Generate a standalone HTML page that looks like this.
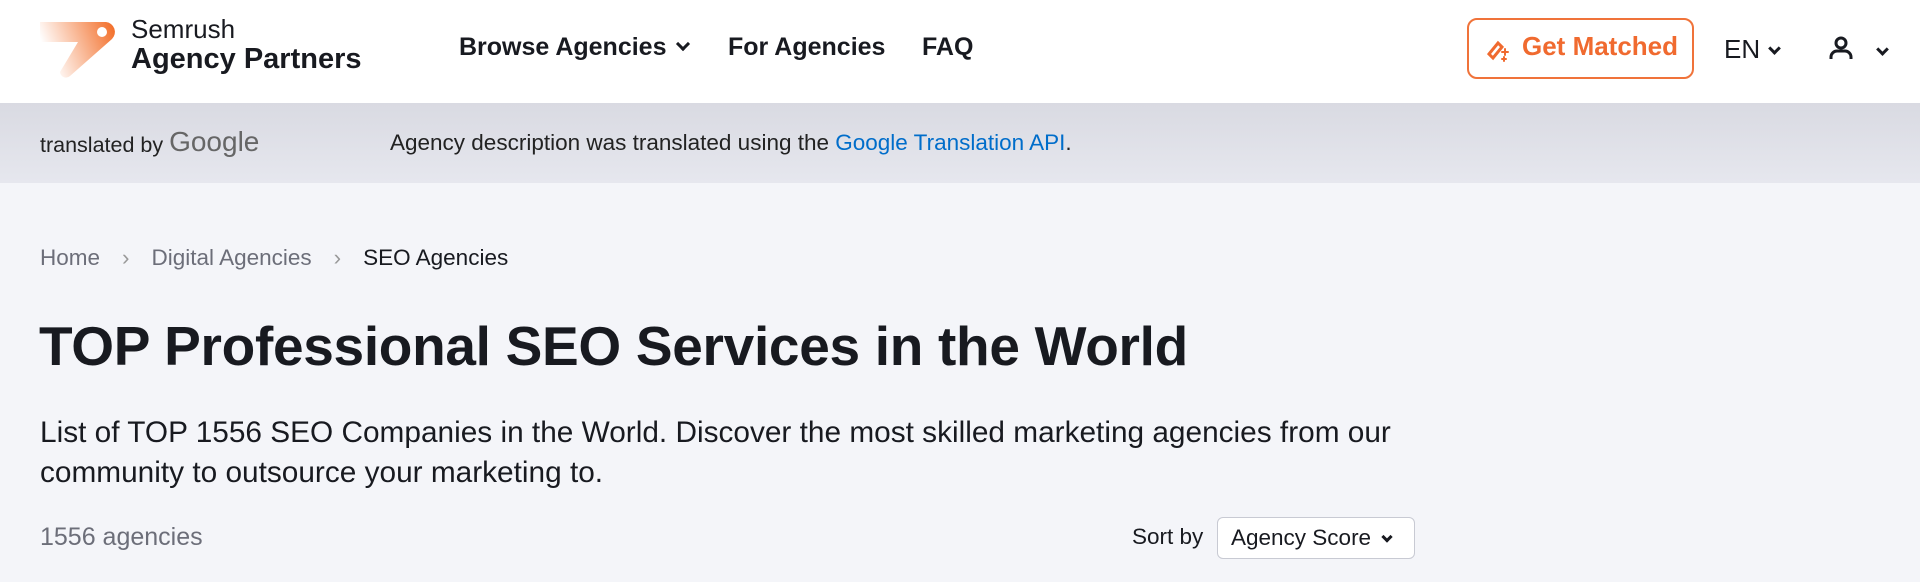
<!DOCTYPE html>
<html><head><meta charset="utf-8"><style>
*{margin:0;padding:0;box-sizing:border-box}
body{width:1920px;height:582px;overflow:hidden;background:#f4f5f9;font-family:"Liberation Sans",sans-serif;color:#181a20;position:relative}
.hdr{position:absolute;left:0;top:0;width:1920px;height:103px;background:#fff}
.band{position:absolute;left:0;top:103px;width:1920px;height:80px;background:linear-gradient(#d9dae2,#e6e7ee)}
.a{position:absolute;white-space:nowrap}
.nav{font-weight:bold;font-size:25px;top:33px}
.chev{display:inline-block;width:10px;height:10px;border-right:3px solid #181a20;border-bottom:3px solid #181a20;transform:rotate(45deg);margin-left:12px;position:relative;top:-6px}
.sep{color:#999;margin:0 22px}
</style></head><body>
<div class="hdr"></div>
<svg class="a" style="left:36px;top:16px" width="84" height="64" viewBox="0 0 84 64">
<defs><linearGradient id="g" x1="1" y1="0" x2="0" y2="0.3"><stop offset="0" stop-color="#f26a22"/><stop offset="1" stop-color="#f26a22" stop-opacity="0"/></linearGradient></defs>
<path d="M4 6 H70 a10 10 0 0 1 6 17 L34 60 a6 6 0 0 1 -10 -4 L42 26 H4 Z" fill="url(#g)"/>
<circle cx="66" cy="16" r="5" fill="#fff"/>
</svg>
<div class="a" style="left:131px;top:14px;font-size:26px;color:#181a20">Semrush</div>
<div class="a" style="left:131px;top:43px;font-size:29px;font-weight:bold">Agency Partners</div>
<div class="a nav" style="left:459px">Browse Agencies<span class="chev"></span></div>
<div class="a nav" style="left:728px">For Agencies</div>
<div class="a nav" style="left:922px">FAQ</div>
<div class="a" style="left:1467px;top:18px;width:227px;height:61px;border:2px solid #f0733a;border-radius:10px;background:#fff"></div>
<svg class="a" style="left:1485px;top:36px" width="26" height="26" viewBox="0 0 26 26" fill="none" stroke="#f06a2f" stroke-width="3" stroke-linecap="round"><path d="M4 18 L13 7 L17 11 L8 22 Z"/><path d="M20 13 v6 M17 16 h6 M19 21 v4 M17 23 h4" stroke-width="2"/></svg>
<div class="a" style="left:1522px;top:31px;font-size:26px;color:#f06a2f;font-weight:bold">Get Matched</div>
<div class="a" style="left:1724px;top:34px;font-size:26px">EN<span class="chev" style="width:9px;height:9px;margin-left:10px;top:-5px"></span></div>
<svg class="a" style="left:1828px;top:35px" width="26" height="26" viewBox="0 0 26 26" fill="none" stroke="#181a20" stroke-width="3"><circle cx="13" cy="8" r="5"/><path d="M3 24 v-2 a6 6 0 0 1 6 -6 h8 a6 6 0 0 1 6 6 v2"/></svg>
<span class="a chev" style="left:1866px;top:41px;width:9px;height:9px"></span>
<div class="band"></div>
<div class="a" style="left:40px;top:127px;font-size:21.5px;color:#222">translated by <span style="font-size:28px;color:#666;position:relative;top:-1px">Google</span></div>
<div class="a" style="left:390px;top:130px;font-size:22.5px;color:#222">Agency description was translated using the <span style="color:#006dca">Google Translation API</span>.</div>
<div class="a" style="left:40px;top:245px;font-size:22.5px;color:#6c6e79">Home<span class="sep">&#8250;</span>Digital Agencies<span class="sep">&#8250;</span><span style="color:#181a20">SEO Agencies</span></div>
<div class="a" style="left:39px;top:314px;font-size:55px;font-weight:bold;letter-spacing:-0.3px">TOP Professional SEO Services in the World</div>
<div class="a" style="left:40px;top:413px;font-size:29.8px;line-height:40px;color:#181a20">List of TOP 1556 SEO Companies in the World. Discover the most skilled marketing agencies from our<br>community to outsource your marketing to.</div>
<div class="a" style="left:40px;top:523px;font-size:25px;color:#6c6e79">1556 agencies</div>
<div class="a" style="left:1132px;top:524px;font-size:22.5px">Sort by</div>
<div class="a" style="left:1217px;top:517px;width:198px;height:42px;border:1.5px solid #c8cad3;border-radius:6px;background:#fff;font-size:22.5px;padding:7px 0 0 13px">Agency Score<span class="chev" style="width:8px;height:8px;margin-left:12px;top:-4px"></span></div>
</body></html>
